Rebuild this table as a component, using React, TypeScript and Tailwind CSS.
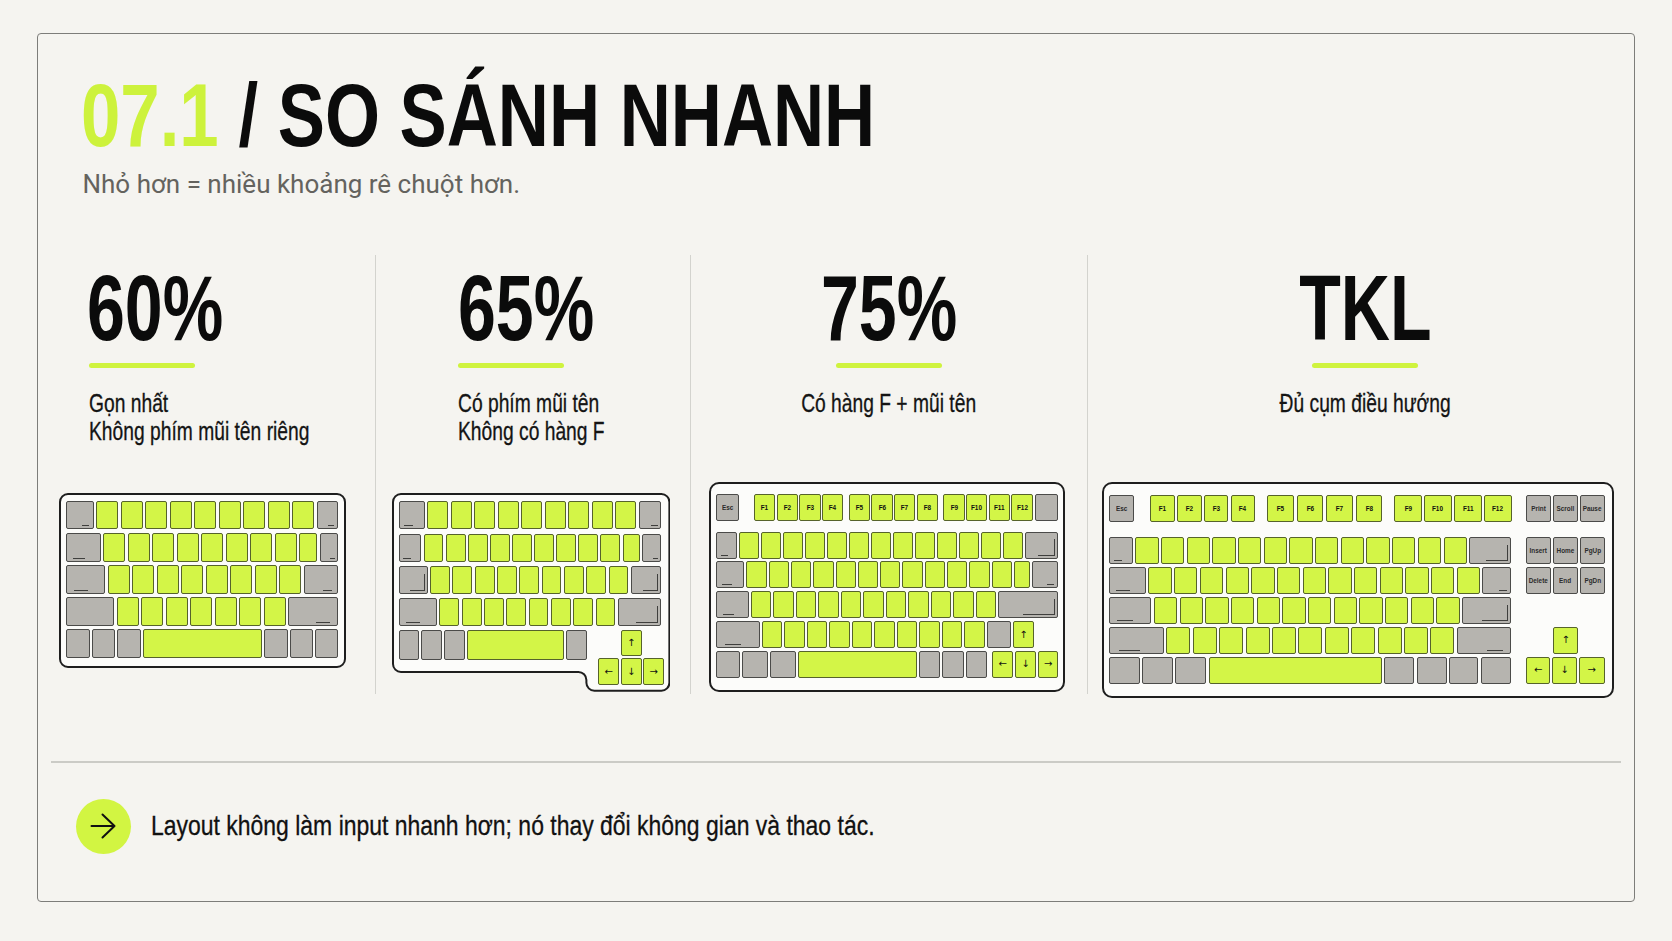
import clsx from 'clsx';

const FONT = "font-['Liberation_Sans',Arial,sans-serif]";

type Mark = 'l' | 'r' | 'L';
type KeySpec = { t: 'g' | 'k' | 'sp'; w?: number; l?: string; grow?: boolean; m?: Mark };

const g = (w: number, l?: string): KeySpec => ({ t: 'g', w, l });
const k = (w: number, m?: Mark, l?: string): KeySpec => ({ t: 'k', w, m, l });
const sp = (w: number): KeySpec => ({ t: 'sp', w });
const grow = (s: KeySpec): KeySpec => ({ ...s, grow: true });
const rep = (n: number, w: number) => Array.from({ length: n }, () => g(w));
const fkeys = (from: number, w: number) => Array.from({ length: 4 }, (_, i) => g(w, `F${from + i}`));

const Key = ({ s }: { s: KeySpec }) => {
    if (s.t === 'sp') return <div className={clsx('shrink-0', s.grow && 'flex-1')} style={s.grow ? undefined : { width: s.w }} />;
    const isArrow = !!s.l && '←↑↓→'.includes(s.l);
    return (
        <div
            className={clsx(
                'relative flex h-full shrink-0 items-center justify-center rounded-[2px] border leading-none',
                s.t === 'g' ? 'border-[#56632b] bg-[#d3f547] text-[#101010]' : 'border-[#4b4b49] bg-[#b6b4af] text-[#2b2b2b]',
                s.grow && 'flex-1'
            )}
            style={s.grow ? undefined : { width: s.w }}
        >
            {s.l && (
                <span
                    className={
                        isArrow
                            ? "font-['DejaVu_Sans',sans-serif] text-[10px]"
                            : "inline-block scale-x-[0.85] font-['Liberation_Sans',Arial,sans-serif] text-[7.5px] font-bold"
                    }
                >
                    {s.l}
                </span>
            )}
            {s.m === 'l' && <span className="absolute bottom-[2px] left-[18%] h-px w-[38%] bg-[#3f3f3d]" />}
            {s.m === 'r' && <span className="absolute bottom-[2px] right-[14%] h-px w-[30%] bg-[#3f3f3d]" />}
            {s.m === 'L' && <span className="absolute bottom-[2px] right-[2px] h-[65%] w-[55%] border-r border-b border-[#3f3f3d]" />}
        </div>
    );
};

const Row = ({ keys, className }: { keys: KeySpec[]; className: string }) => (
    <div className={clsx('flex', className)}>
        {keys.map((s, i) => <Key key={i} s={s} />)}
    </div>
);

// 60%
const Kb60 = () => (
    <div className="flex h-[175px] w-[287px] flex-col gap-[3.5px] rounded-[9px] border-2 border-[#1e1e1e] bg-[#fcfcfa] px-[5.7px] pt-[5.7px]">
        <Row className="h-[28.7px] gap-[2.5px]" keys={[k(27.6, 'r'), ...rep(9, 22), grow(k(0, 'r'))]} />
        <Row className="h-[28.7px] gap-[2.5px]" keys={[k(34.4, 'l'), ...rep(8, 22), g(18), grow(k(0, 'r'))]} />
        <Row className="h-[28.7px] gap-[2.5px]" keys={[k(39.3, 'l'), ...rep(8, 22), grow(k(0, 'r'))]} />
        <Row className="h-[28.7px] gap-[2.5px]" keys={[k(48.3), ...rep(7, 22), grow(k(0, 'r'))]} />
        <Row className="h-[28.7px] gap-[2px]" keys={[k(23.6), k(23.6), k(23.6), g(119), k(23.6), k(23.6), grow(k(0))]} />
    </div>
);

// 65%
const Kb65 = () => (
    <div className="relative h-[198.7px] w-[278.4px]">
        <svg className="absolute inset-0" width="278.4" height="198.7" viewBox="0 0 278.4 198.7">
            <path
                d="M9 1H269.4A8 8 0 0 1 277.4 9V189.7A8 8 0 0 1 269.4 197.7H202.4A8 8 0 0 1 194.4 189.7V187A8 8 0 0 0 186.4 179H9A8 8 0 0 1 1 171V9A8 8 0 0 1 9 1Z"
                fill="#fcfcfa"
                stroke="#1e1e1e"
                strokeWidth="2"
            />
        </svg>
        <div className="relative flex flex-col gap-[4.2px] pt-[8.4px] pr-[9px] pl-[6.7px]">
            <Row className="h-[28px] gap-[2.5px]" keys={[k(26, 'l'), ...rep(9, 21), grow(k(0, 'r'))]} />
            <Row className="h-[28px] gap-[2.3px]" keys={[k(22.7, 'l'), ...rep(9, 19.8), g(17), grow(k(0, 'r'))]} />
            <Row className="h-[28px] gap-[2.5px]" keys={[k(29, 'L'), ...rep(9, 19.8), grow(k(0, 'L'))]} />
            <Row className="h-[28px] gap-[2.5px]" keys={[k(38.3, 'l'), ...rep(8, 19.8), grow(k(0, 'L'))]} />
            <div className="flex items-start justify-between">
                <Row className="h-[29.6px] gap-[2px]" keys={[k(20.7), k(20.7), k(21), g(97.3), k(20.3)]} />
                <div className="-mr-[3px] flex w-[66.4px] flex-col items-center gap-[2.3px]">
                    <Row className="h-[26px]" keys={[g(21.3, '↑')]} />
                    <Row className="h-[26.4px] gap-[1.3px]" keys={[g(21.3, '←'), g(21.3, '↓'), g(21.3, '→')]} />
                </div>
            </div>
        </div>
    </div>
);

// 75%
const Kb75 = () => (
    <div className="flex h-[210.4px] w-[356.4px] flex-col rounded-[10px] border-2 border-[#1e1e1e] bg-[#fcfcfa] pt-[10px] pr-[5px] pl-[5.4px]">
        <div className="flex h-[27.4px]">
            <Key s={k(22.7, undefined, 'Esc')} />
            <Key s={sp(15)} />
            <Row className="gap-[1.4px]" keys={fkeys(1, 21.3)} />
            <Key s={sp(5.3)} />
            <Row className="gap-[1.4px]" keys={fkeys(5, 21.3)} />
            <Key s={sp(5.3)} />
            <Row className="gap-[1.4px]" keys={fkeys(9, 21.3)} />
            <Key s={sp(2.7)} />
            <Key s={grow(k(0))} />
        </div>
        <div className="mt-[10.3px] flex flex-col gap-[2.8px]">
            <Row className="h-[27px] gap-[2px]" keys={[k(21, 'l'), ...rep(13, 20), grow(k(0, 'L'))]} />
            <Row className="h-[27px] gap-[2px]" keys={[k(28, 'l'), ...rep(12, 20.3), g(16.3), grow(k(0, 'r'))]} />
            <Row className="h-[27px] gap-[2px]" keys={[k(32.3, 'l'), ...rep(11, 20.5), grow(k(0, 'L'))]} />
            <Row className="h-[27px] gap-[2px]" keys={[k(43.3, 'l'), ...rep(10, 20.5), k(24.3), g(20.7, '↑'), grow(sp(0))]} />
            <Row
                className="h-[27px] gap-[2px]"
                keys={[k(24), k(25.7), k(26.3), g(118.7), k(21.3), k(21.3), k(21.6), sp(1), g(21, '←'), g(20.6, '↓'), grow(g(0, '→'))]}
            />
        </div>
    </div>
);

// TKL
const TklRow = ({ main, nav, className }: { main: KeySpec[]; nav: KeySpec[]; className: string }) => (
    <div className={clsx('flex gap-[14.6px]', className)}>
        <Row className="w-[402.6px] gap-[2.4px]" keys={main} />
        <Row className="w-[78.8px] gap-[2px]" keys={nav} />
    </div>
);

const KbTkl = () => (
    <div className="flex h-[216px] w-[512.2px] flex-col rounded-[10px] border-2 border-[#1e1e1e] bg-[#fcfcfa] pt-[10.6px] pr-[6.8px] pl-[5.4px]">
        <div className="flex h-[27.6px] gap-[14.6px]">
            <div className="flex w-[402.6px]">
                <Key s={k(25.4, undefined, 'Esc')} />
                <Key s={sp(16.2)} />
                <Row className="gap-[2.3px]" keys={fkeys(1, 24.4)} />
                <Key s={sp(12.5)} />
                <Row className="gap-[3.2px]" keys={fkeys(5, 26.3)} />
                <Key s={sp(12.1)} />
                <Row className="gap-[2.7px]" keys={fkeys(9, 27.3)} />
            </div>
            <Row className="w-[78.8px] gap-[2px]" keys={[k(25, undefined, 'Print'), k(25, undefined, 'Scroll'), grow(k(0, undefined, 'Pause'))]} />
        </div>
        <div className="mt-[14.4px] flex flex-col gap-[2.3px]">
            <TklRow
                className="h-[27.7px]"
                main={[k(24, 'l'), ...rep(13, 23.3), grow(k(0, 'L'))]}
                nav={[k(25, undefined, 'Insert'), k(25, undefined, 'Home'), grow(k(0, undefined, 'PgUp'))]}
            />
            <TklRow
                className="h-[27.7px]"
                main={[k(37.2, 'l'), ...rep(13, 23.3), grow(k(0, 'r'))]}
                nav={[k(25, undefined, 'Delete'), k(25, undefined, 'End'), grow(k(0, undefined, 'PgDn'))]}
            />
            <TklRow className="h-[27.7px]" main={[k(42.6, 'l'), ...rep(12, 23.3), grow(k(0, 'L'))]} nav={[]} />
            <TklRow className="h-[27.7px]" main={[k(55.1, 'l'), ...rep(11, 24), grow(k(0, 'r'))]} nav={[sp(25.4), g(24.3, '↑')]} />
            <TklRow
                className="h-[27.7px]"
                main={[k(31), k(30.8), k(30.8), g(173), k(30.4), k(29.7), k(29.4), grow(k(0))]}
                nav={[g(24.3, '←'), g(24.3, '↓'), grow(g(0, '→'))]}
            />
        </div>
    </div>
);

const Bar = () => <div className="mt-[9px] h-[5px] w-[106px] rounded-full bg-[#cff33e]" />;
const NUM = `${FONT} inline-block whitespace-nowrap scale-x-[0.74] text-[92px] font-bold leading-none text-[#0b0b0b]`;
const DESC = `${FONT} mt-[21px] inline-block whitespace-nowrap scale-x-[0.77] text-[25px] leading-[28px] text-[#141414] [-webkit-text-stroke:0.3px_#141414]`;

export default function App() {
    return (
        <div className="h-[941px] w-[1672px] bg-[#f5f4f0] pt-[33px] pl-[37px]">
            <div className="h-[869px] w-[1598px] rounded-[4px] border-[1.5px] border-[#7d7d7a] px-[13px] pt-[37px]">
                <header className="pl-[30px]">
                    <h1 className={`${FONT} inline-block origin-left scale-x-[0.795] whitespace-nowrap text-[89px] font-bold leading-none text-[#0b0b0b]`}>
                        <span className="text-[#cdf23c]">07.1</span> / SO SÁNH NHANH
                    </h1>
                    <p className="mt-[11px] ml-[1.5px] font-['Roboto',sans-serif] text-[26px] leading-none text-[#64635e]">
                        Nhỏ hơn = nhiều khoảng rê chuột hơn.
                    </p>
                </header>

                <div className="mt-[58px] flex h-[439px]">
                    <section className="flex w-[324px] flex-col">
                        <div className="flex h-[214px] shrink-0 flex-col items-start pt-[7px] pl-[38px]">
                            <div className={`${NUM} -ml-[2px] origin-left`}>60%</div>
                            <Bar />
                            <div className={`${DESC} origin-left`}>
                                Gọn nhất
                                <br />
                                Không phím mũi tên riêng
                            </div>
                        </div>
                        <div className="mt-[24px] ml-[7.5px] shrink-0">
                            <Kb60 />
                        </div>
                    </section>

                    <section className="flex w-[315px] flex-col border-l border-[#d3d3ce]">
                        <div className="flex h-[214px] shrink-0 flex-col items-start pt-[7px] pl-[82px]">
                            <div className={`${NUM} origin-left`}>65%</div>
                            <Bar />
                            <div className={`${DESC} origin-left`}>
                                Có phím mũi tên
                                <br />
                                Không có hàng F
                            </div>
                        </div>
                        <div className="mt-[24px] ml-[16px] shrink-0">
                            <Kb65 />
                        </div>
                    </section>

                    <section className="flex w-[397px] flex-col border-l border-[#d3d3ce]">
                        <div className="flex h-[214px] shrink-0 flex-col items-center pt-[7px]">
                            <div className={`${NUM} origin-center`}>75%</div>
                            <Bar />
                            <div className={`${DESC} origin-center`}>Có hàng F + mũi tên</div>
                        </div>
                        <div className="mt-[13px] ml-[18px] shrink-0">
                            <Kb75 />
                        </div>
                    </section>

                    <section className="flex flex-1 flex-col border-l border-[#d3d3ce]">
                        <div className="flex h-[214px] shrink-0 flex-col items-center pt-[7px] pl-[21px]">
                            <div className={`${NUM} origin-center`}>TKL</div>
                            <Bar />
                            <div className={`${DESC} origin-center`}>Đủ cụm điều hướng</div>
                        </div>
                        <div className="mt-[13px] ml-[13.5px] shrink-0">
                            <KbTkl />
                        </div>
                    </section>
                </div>

                <div className="mt-[67px] h-[1.5px] bg-[#cbcbc6]" />

                <div className="mt-[36px] flex items-center gap-[20px] pl-[24.5px]">
                    <div className="flex h-[55px] w-[55px] shrink-0 items-center justify-center rounded-full bg-[#d2f542]">
                        <svg width="26" height="26" viewBox="0 0 26 26" fill="none" stroke="#111" strokeWidth="2" strokeLinecap="round" strokeLinejoin="round">
                            <path d="M1.5 13H24.5M12.5 1.5L24.5 13L12.5 24.5" />
                        </svg>
                    </div>
                    <p className={`${FONT} inline-block origin-left scale-x-[0.82] whitespace-nowrap text-[28px] leading-none text-[#111] [-webkit-text-stroke:0.3px_#111]`}>
                        Layout không làm input nhanh hơn; nó thay đổi không gian và thao tác.
                    </p>
                </div>
            </div>
        </div>
    );
}
